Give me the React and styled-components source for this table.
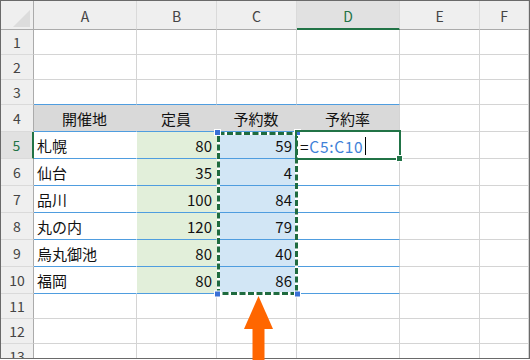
import React from 'react';
import styled, { createGlobalStyle } from 'styled-components';

const GlobalStyle = createGlobalStyle`
    html, body {
        margin: 0;
        padding: 0;
        background: #ffffff;
    }
    body {
        font-family: "Noto Sans CJK JP", "Noto Sans", sans-serif;
    }
`;

const COLS = ['A', 'B', 'C', 'D', 'E', 'F'];
const GRID = '33px 103px 80px 80px 103px 80px 1fr';

const GRIDLINE = '#d4d4d4';
const TABLE_LINE = '#4f9ddf';
const EXCEL_GREEN = '#217346';

const venues = [
    { row: 5, name: '札幌', capacity: 80, booked: 59 },
    { row: 6, name: '仙台', capacity: 35, booked: 4 },
    { row: 7, name: '品川', capacity: 100, booked: 84 },
    { row: 8, name: '丸の内', capacity: 120, booked: 79 },
    { row: 9, name: '烏丸御池', capacity: 80, booked: 40 },
    { row: 10, name: '福岡', capacity: 80, booked: 86 },
];

const Screen = styled.div`
    width: 530px;
    height: 360px;
    background: #ffffff;
`;

const Sheet = styled.div`
    position: relative;
    width: 530px;
    height: 359px;
    box-sizing: border-box;
    border: 1px solid #6a6a6a;
    overflow: hidden;
    background: #ffffff;
`;

const Row = styled.div`
    display: grid;
    grid-template-columns: ${GRID};
    height: ${(p) => p.$h}px;
`;

const Corner = styled.div`
    position: relative;
    box-sizing: border-box;
    background: #efefef;
    border-right: 1px solid #ababab;
    border-bottom: 1px solid #ababab;

    &::after {
        content: '';
        position: absolute;
        right: 3px;
        bottom: 2px;
        width: 0;
        height: 0;
        border-left: 17px solid transparent;
        border-bottom: 17px solid #dcdcdc;
    }
`;

const ColHead = styled.div`
    box-sizing: border-box;
    display: flex;
    align-items: center;
    justify-content: center;
    padding-top: 2px;
    background: ${(p) => (p.$active ? '#e1e1e1' : '#efefef')};
    color: ${(p) => (p.$active ? EXCEL_GREEN : '#444444')};
    border-right: 1px solid #dadada;
    border-bottom: ${(p) => (p.$active ? `2px solid ${EXCEL_GREEN}` : '1px solid #ababab')};
    font-size: 14px;
`;

const RowHead = styled.div`
    box-sizing: border-box;
    display: flex;
    align-items: center;
    justify-content: center;
    background: ${(p) => (p.$active ? '#e1e1e1' : '#efefef')};
    color: ${(p) => (p.$active ? EXCEL_GREEN : '#444444')};
    border-right: ${(p) => (p.$active ? `2px solid ${EXCEL_GREEN}` : '1px solid #ababab')};
    border-bottom: 1px solid #dadada;
    font-size: 14px;
`;

const Cell = styled.div`
    box-sizing: border-box;
    display: flex;
    align-items: center;
    justify-content: ${(p) =>
        p.$align === 'right' ? 'flex-end' : p.$align === 'center' ? 'center' : 'flex-start'};
    padding: 1px 4px 0 3px;
    background: ${(p) => p.$bg || '#ffffff'};
    border-right: 1px solid ${(p) => p.$vline || GRIDLINE};
    border-bottom: 1px solid ${(p) => p.$hline || GRIDLINE};
    color: #111111;
    font-size: 15px;
    white-space: nowrap;
`;

const Formula = styled.span`
    display: flex;
    align-items: center;
    letter-spacing: 0.7px;
    font-size: 15.5px;
`;

const Equals = styled.span`
    color: #111111;
`;

const Ref = styled.span`
    color: #3f82d8;
`;

const Caret = styled.span`
    display: inline-block;
    width: 1px;
    height: 18px;
    margin-left: 2px;
    background: #000000;
`;

/* overlays: copy marquee, active cell frame and the pointer arrow */
const Marquee = styled.svg`
    position: absolute;
    left: 213px;
    top: 128px;
    overflow: visible;
`;

const ActiveFrame = styled.div`
    position: absolute;
    left: 294px;
    top: 129px;
    width: 106px;
    height: 30px;
    box-sizing: border-box;
    border: 2px solid ${EXCEL_GREEN};
`;

const FillHandle = styled.div`
    position: absolute;
    right: -4px;
    bottom: -4px;
    width: 5px;
    height: 5px;
    background: ${EXCEL_GREEN};
    border: 1px solid #ffffff;
`;

const Arrow = styled.svg`
    position: absolute;
    left: 244px;
    top: 296px;
`;

const rowHeight = (n) => (n >= 4 && n <= 10 ? 27 : 25);

const emptyCells = (n) =>
    COLS.map((c) => {
        const inTable = c <= 'D';
        const hline = n === 3 && inTable ? TABLE_LINE : GRIDLINE;
        return <Cell key={c} $hline={hline} />;
    });

const HeaderRow = () => (
    <Row $h={29}>
        <Corner />
        {COLS.map((c) => (
            <ColHead key={c} $active={c === 'D'}>
                {c}
            </ColHead>
        ))}
    </Row>
);

const TitleRow = () => {
    const titles = ['開催地', '定員', '予約数', '予約率'];
    return (
        <Row $h={27}>
            <RowHead>4</RowHead>
            {titles.map((t, i) => (
                <Cell
                    key={t}
                    $align="center"
                    $bg="#d9d9d9"
                    $vline={i === 3 ? GRIDLINE : '#d9d9d9'}
                    $hline={TABLE_LINE}
                >
                    {t}
                </Cell>
            ))}
            <Cell />
            <Cell />
        </Row>
    );
};

const DataRow = ({ v }) => (
    <Row $h={27}>
        <RowHead $active={v.row === 5}>{v.row}</RowHead>
        <Cell $vline="#ffffff" $hline={TABLE_LINE}>
            {v.name}
        </Cell>
        <Cell $align="right" $bg="#e2efda" $vline="#e2efda" $hline={TABLE_LINE}>
            {v.capacity}
        </Cell>
        <Cell $align="right" $bg="#d2e6f5" $vline="#d2e6f5" $hline={TABLE_LINE}>
            {v.booked}
        </Cell>
        <Cell $hline={TABLE_LINE}>
            {v.row === 5 && (
                <Formula>
                    <Equals>=</Equals>
                    <Ref>C5:C10</Ref>
                    <Caret />
                </Formula>
            )}
        </Cell>
        <Cell />
        <Cell />
    </Row>
);

const CopyMarquee = () => {
    const corners = [
        [3.5, 3.5],
        [83.5, 3.5],
        [3.5, 165],
        [83.5, 165],
    ];
    return (
        <Marquee width="88" height="170" viewBox="0 0 88 170">
            <rect x="4.5" y="4.5" width="78" height="160" fill="none" stroke="#ffffff" strokeWidth="3" />
            <rect
                x="4.5"
                y="4.5"
                width="78"
                height="160"
                fill="none"
                stroke="#1f6b3f"
                strokeWidth="3"
                strokeDasharray="6 2.5"
            />
            {corners.map(([x, y], i) => (
                <rect
                    key={i}
                    x={x - 3}
                    y={y - 3}
                    width="6"
                    height="6"
                    fill="#3a70d6"
                    stroke="#ffffff"
                    strokeWidth="1"
                />
            ))}
        </Marquee>
    );
};

export default function App() {
    return (
        <Screen>
            <GlobalStyle />
            <Sheet>
                <HeaderRow />
                {[1, 2, 3].map((n) => (
                    <Row key={n} $h={rowHeight(n)}>
                        <RowHead>{n}</RowHead>
                        {emptyCells(n)}
                    </Row>
                ))}
                <TitleRow />
                {venues.map((v) => (
                    <DataRow key={v.row} v={v} />
                ))}
                {[11, 12, 13].map((n) => (
                    <Row key={n} $h={rowHeight(n)}>
                        <RowHead>{n}</RowHead>
                        {emptyCells(n)}
                    </Row>
                ))}
                <CopyMarquee />
                <ActiveFrame>
                    <FillHandle />
                </ActiveFrame>
            </Sheet>
            <Arrow width="29" height="64" viewBox="0 0 29 64">
                <polygon points="14.5,0 29,33 0,33" fill="#ff6600" />
                <rect x="8.5" y="32" width="12" height="32" fill="#ff6600" />
            </Arrow>
        </Screen>
    );
}
